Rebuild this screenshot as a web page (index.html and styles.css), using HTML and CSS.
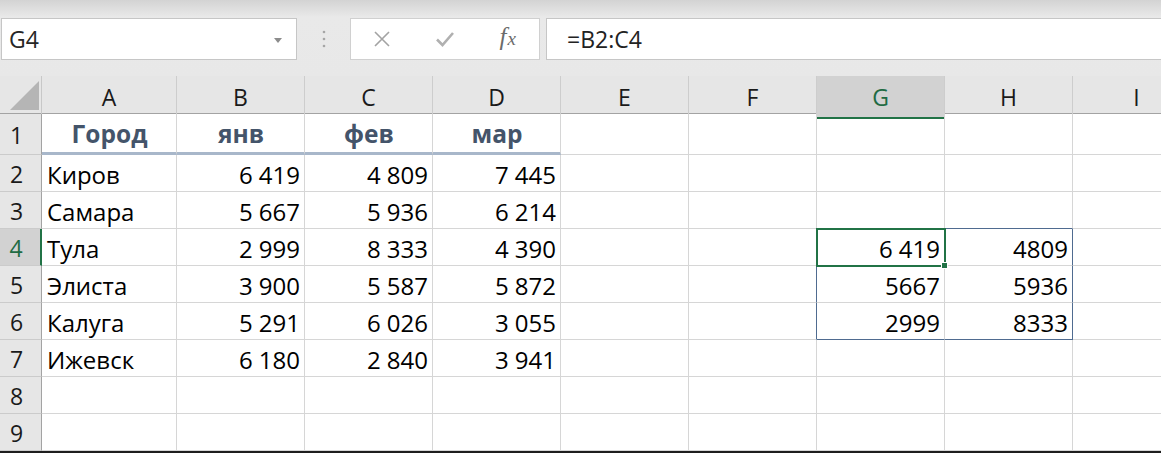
FILE: index.html
```html
<!DOCTYPE html>
<html lang="ru">
<head>
    <meta charset="UTF-8">
    <title>Книга1 - Excel</title>
    <link rel="stylesheet" href="styles.css">
</head>
<body>
    <div class="app">
        <!-- строка формул -->
        <div class="formula-bar">
            <div class="name-box">
                <span>G4</span>
                <svg class="caret" width="8" height="5" viewBox="0 0 8 5"><path d="M0 0h8L4 5z" fill="#8c8c8c"/></svg>
            </div>
            <div class="grip">
                <svg width="4" height="18" viewBox="0 0 4 18">
                    <circle cx="2" cy="2" r="1.3" fill="#a6a6a6"/>
                    <circle cx="2" cy="9" r="1.3" fill="#a6a6a6"/>
                    <circle cx="2" cy="16" r="1.3" fill="#a6a6a6"/>
                </svg>
            </div>
            <div class="fx-buttons">
                <div class="fx-btn">
                    <svg width="18" height="18" viewBox="0 0 18 18"><path d="M2 2L16 16M16 2L2 16" stroke="#a3a3a3" stroke-width="1.6" fill="none"/></svg>
                </div>
                <div class="fx-btn">
                    <svg width="20" height="16" viewBox="0 0 20 16"><path d="M2 8.5L7.5 14L18 2" stroke="#b0b0b0" stroke-width="2.6" fill="none"/></svg>
                </div>
                <div class="fx-btn"><span class="fx">f<small>x</small></span></div>
            </div>
            <div class="formula-input">=B2:C4</div>
        </div>

        <!-- лист -->
        <div class="sheet">
            <div class="row col-heads">
                <div class="corner">
                    <svg width="42" height="38" viewBox="0 0 42 38"><path d="M10 34H39V5z" fill="#b5b5b5"/></svg>
                </div>
                <div class="ch">A</div>
                <div class="ch">B</div>
                <div class="ch">C</div>
                <div class="ch">D</div>
                <div class="ch">E</div>
                <div class="ch">F</div>
                <div class="ch sel">G</div>
                <div class="ch">H</div>
                <div class="ch">I</div>
            </div>

            <div class="row first">
                <div class="rh">1</div>
                <div class="c hd">Город</div>
                <div class="c hd">янв</div>
                <div class="c hd">фев</div>
                <div class="c hd">мар</div>
                <div class="c"></div>
                <div class="c"></div>
                <div class="c"></div>
                <div class="c"></div>
                <div class="c"></div>
            </div>

            <div class="row">
                <div class="rh">2</div>
                <div class="c">Киров</div>
                <div class="c n">6&nbsp;419</div>
                <div class="c n">4&nbsp;809</div>
                <div class="c n">7&nbsp;445</div>
                <div class="c"></div>
                <div class="c"></div>
                <div class="c"></div>
                <div class="c"></div>
                <div class="c"></div>
            </div>

            <div class="row">
                <div class="rh">3</div>
                <div class="c">Самара</div>
                <div class="c n">5&nbsp;667</div>
                <div class="c n">5&nbsp;936</div>
                <div class="c n">6&nbsp;214</div>
                <div class="c"></div>
                <div class="c"></div>
                <div class="c sp-b"></div>
                <div class="c sp-b"></div>
                <div class="c"></div>
            </div>

            <div class="row">
                <div class="rh sel">4</div>
                <div class="c">Тула</div>
                <div class="c n">2&nbsp;999</div>
                <div class="c n">8&nbsp;333</div>
                <div class="c n">4&nbsp;390</div>
                <div class="c"></div>
                <div class="c sp-r"></div>
                <div class="c n active">6&nbsp;419<span class="handle"></span></div>
                <div class="c n sp-r">4809</div>
                <div class="c"></div>
            </div>

            <div class="row">
                <div class="rh">5</div>
                <div class="c">Элиста</div>
                <div class="c n">3&nbsp;900</div>
                <div class="c n">5&nbsp;587</div>
                <div class="c n">5&nbsp;872</div>
                <div class="c"></div>
                <div class="c sp-r"></div>
                <div class="c n">5667</div>
                <div class="c n sp-r">5936</div>
                <div class="c"></div>
            </div>

            <div class="row">
                <div class="rh">6</div>
                <div class="c">Калуга</div>
                <div class="c n">5&nbsp;291</div>
                <div class="c n">6&nbsp;026</div>
                <div class="c n">3&nbsp;055</div>
                <div class="c"></div>
                <div class="c sp-r"></div>
                <div class="c n sp-b">2999</div>
                <div class="c n sp-r sp-b">8333</div>
                <div class="c"></div>
            </div>

            <div class="row">
                <div class="rh">7</div>
                <div class="c">Ижевск</div>
                <div class="c n">6&nbsp;180</div>
                <div class="c n">2&nbsp;840</div>
                <div class="c n">3&nbsp;941</div>
                <div class="c"></div>
                <div class="c"></div>
                <div class="c"></div>
                <div class="c"></div>
                <div class="c"></div>
            </div>

            <div class="row">
                <div class="rh">8</div>
                <div class="c"></div>
                <div class="c"></div>
                <div class="c"></div>
                <div class="c"></div>
                <div class="c"></div>
                <div class="c"></div>
                <div class="c"></div>
                <div class="c"></div>
                <div class="c"></div>
            </div>

            <div class="row">
                <div class="rh">9</div>
                <div class="c"></div>
                <div class="c"></div>
                <div class="c"></div>
                <div class="c"></div>
                <div class="c"></div>
                <div class="c"></div>
                <div class="c"></div>
                <div class="c"></div>
                <div class="c"></div>
            </div>
        </div>
    </div>
</body>
</html>
```

FILE: styles.css
```css
/* базовые стили */
* {
    box-sizing: border-box;
}

body {
    margin: 0;
    padding: 0;
    background: #1e1e1e;
    font-family: "Open Sans", "Noto Sans", sans-serif;
    color: #111;
    overflow: hidden;
}

.app {
    width: 1161px;
    overflow: hidden;
}

/* строка формул */
.formula-bar {
    height: 76px;
    display: flex;
    align-items: flex-start;
    padding-top: 18px;
    background: linear-gradient(#d3d3d3 0, #e9e9e9 17px, #e8e8e8 100%);
}

.name-box {
    margin-left: 1px;
    width: 296px;
    height: 42px;
    background: #fff;
    border: 1px solid #c6c6c6;
    display: flex;
    align-items: center;
    justify-content: space-between;
    padding: 0 14px 0 7px;
    font-size: 23px;
    color: #262626;
}

.name-box .caret {
    margin-top: 2px;
}

.grip {
    width: 53px;
    height: 42px;
    display: flex;
    align-items: center;
    justify-content: center;
}

.fx-buttons {
    width: 190px;
    height: 42px;
    background: #fff;
    border: 1px solid #d0d0d0;
    display: flex;
}

.fx-btn {
    width: 63px;
    display: flex;
    align-items: center;
    justify-content: center;
}

.fx {
    font-family: "Liberation Serif", "DejaVu Serif", serif;
    font-style: italic;
    font-size: 25px;
    color: #6b6b6b;
    padding-bottom: 4px;
}

.fx small {
    font-size: 19px;
    margin-left: 1px;
}

.formula-input {
    flex: 1;
    margin-left: 6px;
    height: 42px;
    background: #fff;
    border: 1px solid #c6c6c6;
    border-right: none;
    padding-left: 20px;
    display: flex;
    align-items: center;
    font-size: 23px;
    color: #222;
}

/* лист */
.sheet {
    background: #fff;
}

.row {
    display: grid;
    grid-template-columns: 42px 135px repeat(8, 128px);
    height: 37px;
}

.row.first {
    height: 41px;
}

.col-heads {
    height: 38px;
    background: #e6e6e6;
    border-bottom: 1px solid #a3a3a3;
}

.corner {
    border-right: 1px solid #c8c8c8;
}

.ch {
    display: flex;
    align-items: center;
    justify-content: center;
    padding-bottom: 2px;
    font-size: 23px;
    color: #1a1a1a;
    border-right: 1px solid #cdcdcd;
}

.ch.sel {
    background: #d2d2d2;
    color: #1f6b43;
    border-bottom: 2px solid #217346;
    padding-bottom: 0;
}

.rh {
    display: flex;
    align-items: center;
    justify-content: center;
    padding-right: 8px;
    padding-top: 2px;
    font-size: 23px;
    color: #1a1a1a;
    background: #e6e6e6;
    border-right: 1px solid #a3a3a3;
    border-bottom: 1px solid #cbcbcb;
}

.rh.sel {
    background: #d2d2d2;
    color: #1f6b43;
    border-right: 2px solid #217346;
}

.c {
    display: flex;
    align-items: center;
    padding: 2px 4px 0 5px;
    font-size: 24px;
    color: #000;
    white-space: nowrap;
    border-right: 1px solid #d6d6d6;
    border-bottom: 1px solid #d6d6d6;
}

.c.n {
    justify-content: flex-end;
}

.c.hd {
    justify-content: center;
    font-weight: 700;
    font-size: 24.5px;
    color: #44546a;
    border-bottom: 3px solid #a8b7ca;
    padding-top: 0;
}

/* выделение и диапазон */
.c.sp-r {
    border-right-color: #4f6b90;
}

.c.sp-b {
    border-bottom-color: #4f6b90;
}

.c.active {
    position: relative;
    z-index: 2;
    outline: 2px solid #217346;
    outline-offset: -1px;
}

.handle {
    position: absolute;
    right: -4px;
    bottom: -4px;
    width: 7px;
    height: 7px;
    background: #217346;
    border: 1px solid #fff;
}
```
